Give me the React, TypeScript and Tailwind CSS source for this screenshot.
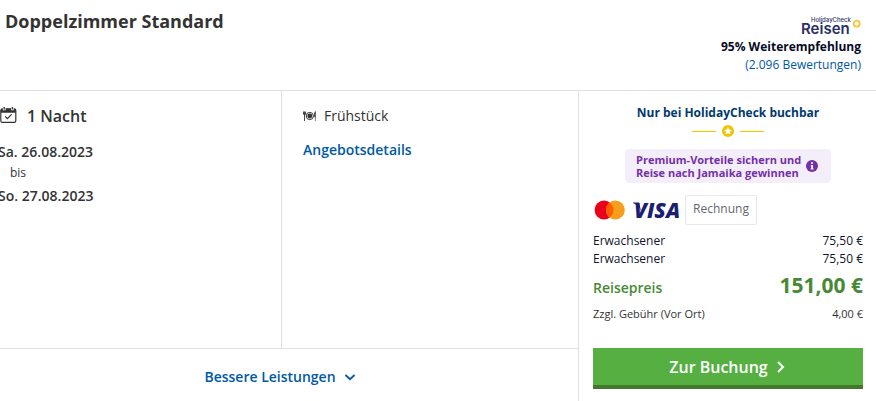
import React from "react";

function CalendarIcon() {
  return (
    <svg width="17" height="19" viewBox="0 0 17 19" fill="none" aria-hidden="true">
      <rect x="0.8" y="1.9" width="15" height="13.4" rx="1.6" stroke="#333" strokeWidth="1.2" />
      <path d="M0.8 5.8V3.4Q0.8 1.8 2.4 1.8H14.2Q15.8 1.8 15.8 3.4V5.8Z" fill="#333" />
      <path d="M4.2 0V3.2M12.4 0V3.2" stroke="#fff" strokeWidth="2.8" />
      <path d="M4.2 0V2.4M12.4 0V2.4" stroke="#333" strokeWidth="1.4" />
      <path d="M5.2 9.4L7.4 11.6L11.6 7.4" stroke="#333" strokeWidth="1.3" />
    </svg>
  );
}

function MealIcon() {
  return (
    <svg width="13" height="11" viewBox="0 0 13 11" fill="none" aria-hidden="true">
      <circle cx="6.8" cy="5" r="3.6" stroke="#333" strokeWidth="1" />
      <circle cx="6.8" cy="5" r="2.4" fill="#333" />
      <path d="M0.5 0.5V3.4H2.5V0.5M1.5 0.5V10" stroke="#333" strokeWidth="0.9" />
      <path d="M12.4 10V0.5Q11.2 1.4 11.2 5.8H12.4" fill="#333" stroke="#333" strokeWidth="0.6" />
    </svg>
  );
}

function ReisenLogo() {
  return (
    <svg width="61" height="20" viewBox="0 0 61 20" role="img" aria-label="HolidayCheck Reisen">
      <text x="11" y="5.5" fontSize="6" fontWeight="500" fill="#2b2f66" fontFamily="Inter, sans-serif">HolidayCheck</text>
      <text x="1" y="18" fontSize="15" fontWeight="600" fill="#2b2f66" fontFamily="Inter, sans-serif">Reisen</text>
      <circle cx="56.7" cy="7.7" r="3" fill="none" stroke="#fcc436" strokeWidth="1.8" />
    </svg>
  );
}

function Mastercard() {
  return (
    <svg width="32" height="20" viewBox="0 0 32 20" role="img" aria-label="Mastercard">
      <circle cx="11" cy="10" r="9.4" fill="#eb001b" />
      <circle cx="22.4" cy="10" r="9.4" fill="#f79e1b" />
      <path d="M16.7 2.5A9.4 9.4 0 0 1 16.7 17.5A9.4 9.4 0 0 1 16.7 2.5Z" fill="#ff5f00" />
    </svg>
  );
}

function Visa() {
  return (
    <svg width="48" height="20" viewBox="0 0 48 20" role="img" aria-label="Visa">
      <path d="M2 2.5H8L10 11Q7.5 5 2 3Z" fill="#1a1f71" />
      <text x="3" y="17.5" fontSize="21" fontWeight="800" fontStyle="italic" fill="#1a1f71" fontFamily="'Open Sans', sans-serif">VISA</text>
    </svg>
  );
}

function PriceRow({ label, price }: { label: string; price: string }) {
  return (
    <tr className="h-[18px] text-xs/[18px] text-[#11142d]">
      <th scope="row" className="text-left font-normal">{label}</th>
      <td className="text-right">{price}</td>
    </tr>
  );
}

export default function App() {
  return (
    <main className="flex min-h-screen flex-col bg-white font-['Open_Sans',sans-serif] text-[#333]">
      <header className="flex items-start justify-between border-b border-[#dee0e4] pr-[15px] pb-4 pl-[5px]">
        <h1 className="pt-2 text-lg/[26px] font-bold">Doppelzimmer Standard</h1>
        <div className="flex flex-col items-end pt-4 text-xs/[18px]">
          <div className="h-[22px]"><ReisenLogo /></div>
          <p className="font-bold text-[#060a26]">95% Weiterempfehlung</p>
          <a href="#bewertungen" className="text-[#0059a3]">(2.096 Bewertungen)</a>
        </div>
      </header>

      <div className="flex flex-1">
        <div className="flex flex-1 flex-col">
          <div className="flex flex-1 border-b border-[#dee0e4]">
            <section className="w-[282px] border-r border-[#dee0e4] pt-3">
              <h2 className="flex items-center gap-[10px] text-base/[26px] font-semibold">
                <CalendarIcon />
                1 Nacht
              </h2>
              <div className="-ml-0.5 pt-3 text-sm/[22px] font-semibold">
                <p>Sa. 26.08.2023</p>
                <p className="pl-3 text-xs/[20px] font-normal">bis</p>
                <p className="pt-0.5">So. 27.08.2023</p>
              </div>
            </section>
            <section className="flex-1 pt-[14px] pl-[21px] text-sm/[22px]">
              <p className="flex items-center gap-2">
                <MealIcon />
                Frühstück
              </p>
              <a href="#angebot" className="mt-3 inline-block font-semibold text-[#0059a3]">Angebotsdetails</a>
            </section>
          </div>
          <button type="button" className="flex h-[52px] items-center justify-center gap-2 pt-1 pr-[18px] text-sm/[22px] font-semibold text-[#0059a3]">
            Bessere Leistungen
            <svg width="12" height="8" viewBox="0 0 12 8" fill="none" aria-hidden="true">
              <path d="M1.5 2L6 6.2L10.5 2" stroke="currentColor" strokeWidth="1.8" />
            </svg>
          </button>
        </div>

        <aside className="w-[298px] border-l border-[#dee0e4] pr-[13px] pb-3 pl-[14px]">
          <p className="pt-[13px] text-center text-xs/[18px] font-bold text-[#003a70]">Nur bei HolidayCheck buchbar</p>
          <div className="mt-[3px] flex h-3 items-center justify-center gap-1.5">
            <span className="h-px w-6 bg-[#f0c400]" />
            <svg width="12" height="12" viewBox="0 0 12 12" aria-hidden="true">
              <circle cx="6" cy="6" r="6" fill="#f0c400" />
              <path d="M6 2L7.2 4.6L10 4.9L7.9 6.8L8.5 9.6L6 8.2L3.5 9.6L4.1 6.8L2 4.9L4.8 4.6Z" fill="#fff" />
            </svg>
            <span className="h-px w-6 bg-[#f0c400]" />
          </div>
          <div className="mx-auto mt-3 flex h-[34px] w-[206px] items-center gap-[5px] rounded bg-[#f4eefa] pl-[11px] text-[11px]/[13px] font-bold text-[#7330a8]">
            <p className="whitespace-nowrap">Premium-Vorteile sichern und<br />Reise nach Jamaika gewinnen</p>
            <svg width="12" height="12" viewBox="0 0 12 12" className="shrink-0" aria-hidden="true">
              <circle cx="6" cy="6" r="6" fill="#7330a8" />
              <path d="M5 2.2H7V3.8H5ZM4.6 4.9H7V8.4H7.6V9.4H4.5V8.4H5.2V5.8H4.6Z" fill="#fff" />
            </svg>
          </div>
          <div className="mt-3 flex h-[30px] items-center gap-1.5">
            <Mastercard />
            <Visa />
            <span className="flex h-[30px] w-[72px] items-center justify-center rounded-[2px] border border-[#e8e8e8] pb-0.5 text-xs text-[#5f6872]">Rechnung</span>
          </div>
          <table className="mt-[7px] w-full">
            <tbody>
              <PriceRow label="Erwachsener" price="75,50 €" />
              <PriceRow label="Erwachsener" price="75,50 €" />
              <tr className="h-9 text-[#478a35]">
                <th scope="row" className="pt-1 text-left text-sm font-semibold">Reisepreis</th>
                <td className="pb-0.5 text-right text-[21px]/[28px] font-bold">151,00 €</td>
              </tr>
              <tr className="h-5 text-[11px]/[20px]">
                <th scope="row" className="text-left font-normal">Zzgl. Gebühr (Vor Ort)</th>
                <td className="text-right">4,00 €</td>
              </tr>
            </tbody>
          </table>
          <button type="button" className="mt-6 flex h-[41px] w-full items-center justify-center gap-2 border-b-4 border-[#43782d] bg-[#55b041] pr-[2px] text-base font-semibold text-white">
            Zur Buchung
            <svg width="9" height="12" viewBox="0 0 9 12" fill="none" aria-hidden="true">
              <path d="M2 1L7 6L2 11" stroke="currentColor" strokeWidth="2" />
            </svg>
          </button>
        </aside>
      </div>
    </main>
  );
}
